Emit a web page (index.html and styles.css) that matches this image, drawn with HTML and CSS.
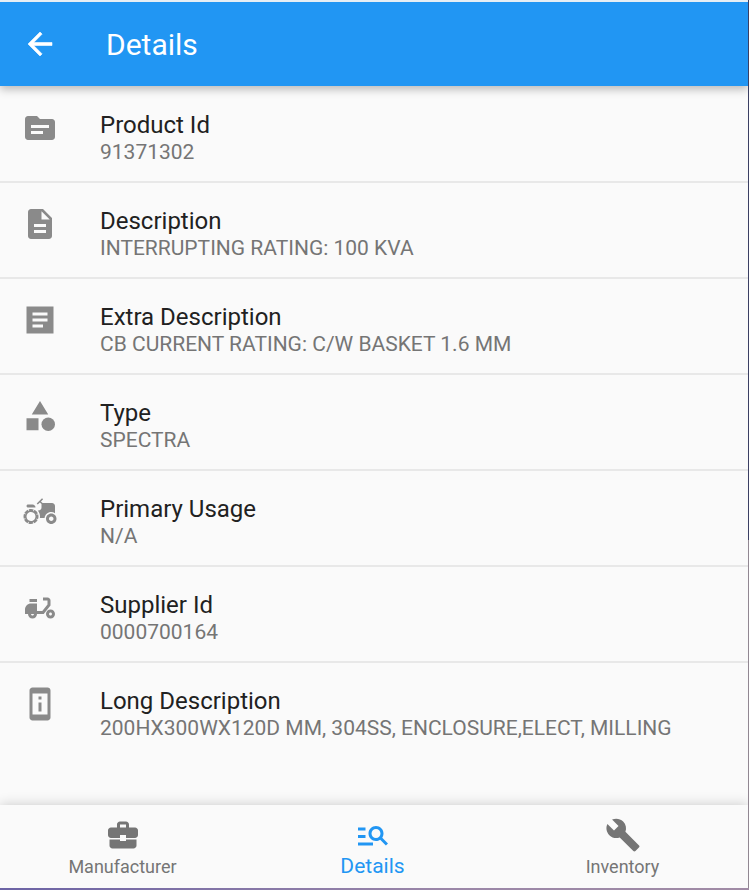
FILE: index.html
```html
<!DOCTYPE html>
<html lang="en">
<head>
<meta charset="utf-8">
<title>Details</title>
<link rel="stylesheet" href="styles.css">
</head>
<body>
<div class="desktop">
<div class="app">
  <header class="bar">
    <svg class="icon back" viewBox="0 0 24 24"><path d="M20 11H7.83l5.59-5.59L12 4l-8 8 8 8 1.41-1.41L7.83 13H20v-2z"/></svg>
    <h1>Details</h1>
  </header>
  <main class="list">
    <section class="row">
      <svg class="icon" viewBox="0 0 24 24"><path d="M20 6h-8l-2-2H4c-1.1 0-1.99.9-1.99 2L2 18c0 1.1.9 2 2 2h16c1.1 0 2-.9 2-2V8c0-1.1-.9-2-2-2zm-6 10H6v-2h8v2zm4-4H6v-2h12v2z"/></svg>
      <div><h2>Product Id</h2><p>91371302</p></div>
    </section>
    <section class="row">
      <svg class="icon" viewBox="0 0 24 24"><path d="M14 2H6c-1.1 0-1.99.9-1.99 2L4 20c0 1.1.89 2 1.99 2H18c1.1 0 2-.9 2-2V8l-6-6zm2 16H8v-2h8v2zm0-4H8v-2h8v2zm-3-5V3.5L18.5 9H13z"/></svg>
      <div><h2>Description</h2><p>INTERRUPTING RATING: 100 KVA</p></div>
    </section>
    <section class="row">
      <svg class="icon" viewBox="0 0 24 24"><path d="M21 3H3v18h18V3zm-7 14H7v-2h7v2zm3-4H7v-2h10v2zm0-4H7V7h10v2z"/></svg>
      <div><h2>Extra Description</h2><p>CB CURRENT RATING: C/W BASKET 1.6 MM</p></div>
    </section>
    <section class="row">
      <svg class="icon" viewBox="0 0 24 24"><path d="M12 2l-5.5 9h11zM3 13.5h8v8H3z"/><circle cx="17.5" cy="17.5" r="4.5"/></svg>
      <div><h2>Type</h2><p>SPECTRA</p></div>
    </section>
    <section class="row">
      <svg class="icon" viewBox="0 0 24 24"><path d="M19.5 12c.93 0 1.78.28 2.5.76V8c0-1.1-.9-2-2-2h-6.29l-1.06-1.06 1.41-1.41-.71-.71-3.53 3.53.71.71 1.41-1.41L13 6.71V9c0 1.1-.9 2-2 2h-.54c.95 1.06 1.54 2.46 1.54 4 0 .34-.04.67-.09 1h3.14c.25-2.25 2.14-4 4.45-4z"/><path d="M19.5 13c-1.93 0-3.5 1.57-3.5 3.5s1.57 3.5 3.5 3.5 3.5-1.57 3.5-3.5-1.57-3.5-3.5-3.5zm0 5c-.83 0-1.5-.67-1.5-1.5s.67-1.5 1.5-1.5 1.5.67 1.5 1.5-.67 1.5-1.5 1.5z"/><path d="M4 9h5c0-1.1-.9-2-2-2H4c-.55 0-1 .45-1 1s.45 1 1 1z"/><path d="M9.83 13.82l-.18-.47L10.58 13c-.46-1.06-1.28-1.91-2.31-2.43l-.4.89-.46-.21.4-.9C7.26 10.13 6.64 10 6 10c-.53 0-1.04.11-1.52.26l.34.91-.47.18L4 10.42c-1.06.46-1.91 1.28-2.43 2.31l.89.4-.21.46-.9-.4C1.13 13.74 1 14.36 1 15c0 .53.11 1.04.26 1.52l.91-.34.18.47L1.42 17c.46 1.06 1.28 1.91 2.31 2.43l.4-.89.46.21-.4.9C4.74 19.87 5.36 20 6 20c.53 0 1.04-.11 1.52-.26l-.34-.91.47-.18.35.93c1.06-.46 1.91-1.28 2.43-2.31l-.89-.4.21-.46.9.4C10.87 16.26 11 15.64 11 15c0-.53-.11-1.04-.26-1.52l-.91.34zM7.15 17.77c-1.53.63-3.29-.09-3.92-1.62s.09-3.29 1.62-3.92 3.29.09 3.92 1.62-.09 3.29-1.62 3.92z"/></svg>
      <div><h2>Primary Usage</h2><p>N/A</p></div>
    </section>
    <section class="row">
      <svg class="icon" viewBox="0 0 24 24"><path d="M19 7c0-1.1-.9-2-2-2h-3v2h3v2.65L13.52 14H10V9H6c-2.21 0-4 1.79-4 4v3h2c0 1.66 1.34 3 3 3s3-1.34 3-3h4.48L19 10.35V7zM7 17c-.55 0-1-.45-1-1h2c0 .55-.45 1-1 1z"/><path d="M5 6h5v2H5zM19 13c-1.66 0-3 1.34-3 3s1.34 3 3 3 3-1.34 3-3-1.34-3-3-3zm0 4c-.55 0-1-.45-1-1s.45-1 1-1 1 .45 1 1-.45 1-1 1z"/></svg>
      <div><h2>Supplier Id</h2><p>0000700164</p></div>
    </section>
    <section class="row">
      <svg class="icon" viewBox="0 0 24 24"><path d="M13 7h-2v2h2V7zm0 4h-2v6h2v-6zm4-9.99L7 1c-1.1 0-2 .9-2 2v18c0 1.1.9 2 2 2h10c1.1 0 2-.9 2-2V3c0-1.1-.9-1.99-2-1.99zM17 19H7V5h10v14z"/></svg>
      <div><h2>Long Description</h2><p>200HX300WX120D MM, 304SS, ENCLOSURE,ELECT, MILLING</p></div>
    </section>
  </main>
  <nav class="tabs">
    <a class="tab">
      <svg class="icon" viewBox="0 0 24 24"><path d="M10 16v-1H3.01L3 19c0 1.11.89 2 2 2h14c1.11 0 2-.89 2-2v-4h-7v1h-4zm10-9h-4.01V5c0-1.1-.9-2-2-2h-4c-1.1 0-2 .9-2 2v2H4c-1.1 0-2 .9-2 2v3c0 1.11.89 2 2 2h6v-2h4v2h6c1.1 0 2-.9 2-2V9c0-1.1-.9-2-2-2zm-6 0h-4V5h4v2z"/></svg>
      <span>Manufacturer</span>
    </a>
    <a class="tab active">
      <svg class="icon" viewBox="0 0 24 24"><path d="M7 9H2V7h5v2zm0 3H2v2h5v-2zm13.59 7l-3.83-3.83c-.8.52-1.74.83-2.76.83-2.76 0-5-2.24-5-5s2.24-5 5-5 5 2.24 5 5c0 1.02-.31 1.96-.83 2.75L22 17.59 20.59 19zM17 11c0-1.65-1.35-3-3-3s-3 1.35-3 3 1.35 3 3 3 3-1.35 3-3zM2 19h10v-2H2v2z"/></svg>
      <span>Details</span>
    </a>
    <a class="tab">
      <svg class="icon" viewBox="0 0 24 24"><path d="M22.7 19l-9.1-9.1c.9-2.3.4-5-1.5-6.9-2-2-5-2.4-7.4-1.3L9 6 6 9 1.6 4.7C.4 7.1.9 10.1 2.9 12.1c1.9 1.9 4.6 2.4 6.9 1.5l9.1 9.1c.4.4 1 .4 1.4 0l2.3-2.3c.5-.4.5-1.1.1-1.4z"/></svg>
      <span>Inventory</span>
    </a>
  </nav>
</div>
<div class="edge-right"></div>
<div class="edge-bottom"></div>
</div>
</body>
</html>
```
FILE: styles.css
```css
* { box-sizing: border-box; margin: 0; }
body { font-family: Roboto, sans-serif; }
.desktop {
  display: grid;
  grid-template: 888px 2px / 748px 1px;
  overflow: hidden;
}
.edge-right { background: linear-gradient(#3b3f63 540px, #918792 540px); }
.edge-bottom { grid-column: 1 / 3; background: linear-gradient(90deg, #6c63a5, #9b87a8 60%, #a08ba5); }
.app {
  display: flex;
  flex-direction: column;
  background: #fafafa;
  border-top: 2px solid #e6eef4;
  overflow: hidden;
}
.icon { width: 36px; height: 36px; flex: none; display: block; fill: currentColor; }
.back { stroke: currentColor; stroke-width: .4; stroke-linejoin: round; }
.bar {
  display: flex;
  align-items: center;
  gap: 48px;
  height: 84px;
  padding-left: 22px;
  background: #2196f3;
  color: #fff;
  box-shadow: 0 3px 9px rgba(0, 0, 0, .28);
  z-index: 1;
}
h1 { padding-top: 2px; font-size: 30px; line-height: 36px; font-weight: 400; }
.list { flex: 1; }
.row {
  display: flex;
  gap: 42px;
  height: 96px;
  padding: 24px 0 0 22px;
  border-bottom: 2px solid #e8e8e8;
  color: #8a8a8a;
}
.row:first-child { height: 97px; }
.row:last-child { border-bottom: 0; }
.row + .row { padding-top: 23px; }
h2 { padding-top: 1px; font-size: 24px; line-height: 28px; font-weight: 400; color: #212121; }
.row p { font-size: 21px; line-height: 26px; color: #757575; }
.tabs {
  display: flex;
  height: 83px;
  padding-right: .5px;
  background: #fafafa;
  box-shadow: 0 0 12px rgba(0, 0, 0, .2);
  z-index: 1;
}
.tab {
  flex: none;
  width: 250px;
  display: flex;
  flex-direction: column;
  align-items: center;
  padding-top: 12px;
  color: #757575;
  font-size: 18px;
  line-height: 28px;
}
.tab:first-child { margin-left: -2.5px; }
.active { color: #2196f3; font-size: 21px; line-height: 26px; }
```
